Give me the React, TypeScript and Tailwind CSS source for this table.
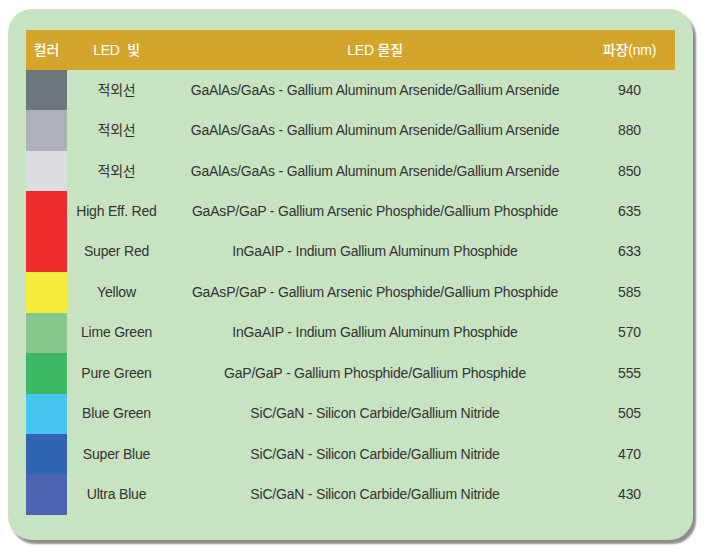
import React from "react";

const rows = [
  { c: "#6f757d", n: "적외선", m: "GaAlAs/GaAs - Gallium Aluminum Arsenide/Gallium Arsenide", w: "940" },
  { c: "#adb2b8", n: "적외선", m: "GaAlAs/GaAs - Gallium Aluminum Arsenide/Gallium Arsenide", w: "880" },
  { c: "#dcdde1", n: "적외선", m: "GaAlAs/GaAs - Gallium Aluminum Arsenide/Gallium Arsenide", w: "850" },
  { c: "#ee2a2a", n: "High Eff. Red", m: "GaAsP/GaP - Gallium Arsenic Phosphide/Gallium Phosphide", w: "635" },
  { c: "#ee2a2a", n: "Super Red", m: "InGaAIP - Indium Gallium Aluminum Phosphide", w: "633" },
  { c: "#f5ec3a", n: "Yellow", m: "GaAsP/GaP - Gallium Arsenic Phosphide/Gallium Phosphide", w: "585" },
  { c: "#86c98e", n: "Lime Green", m: "InGaAIP - Indium Gallium Aluminum Phosphide", w: "570" },
  { c: "#3fb866", n: "Pure Green", m: "GaP/GaP - Gallium Phosphide/Gallium Phosphide", w: "555" },
  { c: "#46c6f0", n: "Blue Green", m: "SiC/GaN - Silicon Carbide/Gallium Nitride", w: "505" },
  { c: "#2f64b0", n: "Super Blue", m: "SiC/GaN - Silicon Carbide/Gallium Nitride", w: "470" },
  { c: "#4b63b0", n: "Ultra Blue", m: "SiC/GaN - Silicon Carbide/Gallium Nitride", w: "430" },
];

export default function App() {
  return (
    <div
      className="w-[711px] h-[553px] bg-white pt-[9px] pl-[8px]"
      style={{ fontFamily: '"Liberation Sans", Arial, "Noto Sans CJK KR", sans-serif' }}
    >
      <div className="w-[685px] h-[531px] rounded-[24px] bg-[#c8e3c2] shadow-[3px_4px_2px_rgba(0,0,0,0.45)] pt-[21px] pl-[18px]">
        <div className="w-[649px]">
          <div className="flex h-[40px] bg-[#d4a52d] text-white text-[14px] font-medium items-center tracking-[-0.2px]">
            <div className="w-[41px] text-center">컬러</div>
            <div className="w-[99px] text-center">LED&nbsp;&nbsp;빛</div>
            <div className="w-[418px] text-center">LED 물질</div>
            <div className="w-[91px] text-center">파장(nm)</div>
          </div>
          {rows.map((r, i) => (
            <div key={i} className="flex h-[40.45px] items-center text-[14px] text-[#333333] tracking-[-0.2px]">
              <div className="w-[41px] h-full" style={{ backgroundColor: r.c }} />
              <div className="w-[99px] text-center">{r.n}</div>
              <div className="w-[418px] text-center">{r.m}</div>
              <div className="w-[91px] text-center">{r.w}</div>
            </div>
          ))}
        </div>
      </div>
    </div>
  );
}
